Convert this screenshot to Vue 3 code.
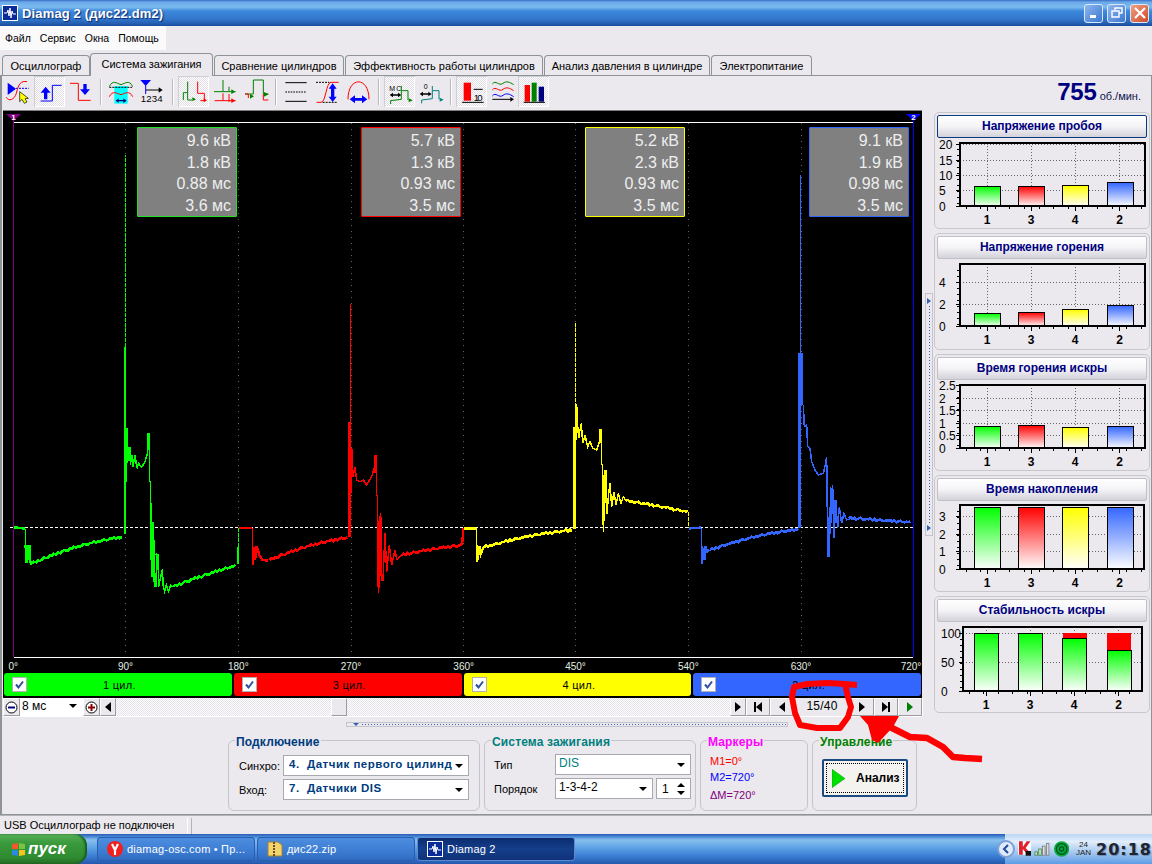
<script setup>
const jitter = [0, -3, 2, -2, 3, 0, -3, 1, 2, -1]

// noisy rising part of a trace, in the units of the trace group (3 units = 1px)
const slope = (x0, y0, x1, y1, bow = 0) => {
  const pts = []
  let i = 0
  for (let x = x0; x <= x1; x += 6) {
    const t = (x - x0) / (x1 - x0)
    const y = y0 + (y1 - y0) * t - bow * Math.sin(Math.PI * t)
    pts.push(x + ',' + Math.round(y + jitter[i++ % jitter.length]))
  }
  return pts.join(' ')
}

const traces = [
  {
    color: '#00ff00', tx: 0,
    thick: [
      '42,712 76,716',
      '77,765 79,818 85,770 88,770 89,810 94,824',
      slope(96, 820, 370, 740, 10),
      '375,732 375,172',
      '378,415 378,575',
      '446,428 446,480',
    ],
    thin: [
      '76,716 76,815',
      '380,415 382,415 383,520 385,472 390,472 391,525 396,495 399,530 405,495 411,535 416,520 425,532 435,515 442,492 445,430 448,430 449,575 452,575 453,792 456,860 459,695 461,725 463,890 468,890 470,792 475,795 476,890 480,870 487,838 490,890 494,905 499,885 506,905 512,885 518,892',
    ],
    thick2: [slope(520, 890, 710, 826, 3), '714,822 714,770', '380,415 380,520', '470,792 474,840', '459,725 461,850'],
    dashed: ['376,172 376,-405', '715,770 715,712'],
  },
  {
    color: '#ff0000', tx: 0,
    thick: [
      '718,714 757,714',
      '759,825 761,770 765,810 770,770 778,795 788,810 805,812',
      slope(808, 810, 1046, 742, 8),
      '1049,740 1049,397',
      '1053,475 1053,610',
      slope(1205, 795, 1380, 766, 2),
      '1127,495 1127,550',
    ],
    thin: [
      '757,714 757,825',
      '1051,397 1051,42',
      '1056,478 1059,560 1065,530 1070,570 1080,575 1090,570 1100,585 1115,560 1124,530 1128,495 1130,615 1133,620 1134,880 1136,908 1141,670 1144,870 1149,870 1155,730 1160,845 1168,765 1175,825 1185,780 1190,808 1205,795',
    ],
    thick2: ['1135,700 1135,880', '1143,680 1143,800', '1380,766 1386,762 1388,745 1390,715'],
    dashed: [],
  },
  {
    color: '#ffff00', tx: 460,
    thick: [
      '12,715 48,715',
      '51,765 51,815 58,770 62,792 70,772',
      slope(72, 772, 340, 720, 7),
      '344,718 344,412',
      '348,342 348,450',
      '422,418 422,460',
      slope(498, 632, 684, 666, 1),
      '429,600 429,705',
      '437,540 437,640',
    ],
    thin: [
      '49,715 49,815',
      '350,342 352,395 356,445 360,420 364,400 368,460 375,435 383,470 390,455 398,475 410,480 418,455 423,418 425,522 428,525 430,725 433,650 437,540 441,672 445,620 450,580 455,650 462,605 468,645 475,610 483,640 490,620 498,632',
    ],
    thick2: [],
    dashed: ['346,410 346,98', '685,666 685,715'],
  },
  {
    color: '#3366ff', tx: 460,
    thick: [
      '688,715 722,713',
      '726,822 726,768 733,810 736,770 742,785 748,780',
      slope(750, 780, 1015, 718, 8),
      '1019,715 1019,190',
      '1024,190 1024,345',
      '1113,595 1113,700',
      '1127,630 1127,700',
      slope(1165, 684, 1356, 697, 0),
      '1106,680 1106,800',
    ],
    thin: [
      '724,713 724,820',
      '1021,190 1021,-345',
      '1030,345 1033,410 1040,405 1043,470 1050,475 1055,515 1065,540 1075,555 1090,550 1097,520 1100,500 1102,665 1105,800 1108,800 1112,590 1115,680 1118,585 1122,745 1127,630 1133,715 1138,650 1145,700 1152,670 1160,690 1175,685',
    ],
    thick2: [],
    dashed: [],
  },
]

const gridX = [13.3, 125.5, 238.3, 351, 463.7, 575.5, 688.3, 801, 913.3]
const degrees = gridX.map((x, i) => ({ x: Math.min(x, 911), label: i * 90 + '°' }))

const readings = [
  { x: 137, color: '#22e022', rows: ['9.6 кВ', '1.8 кВ', '0.88 мс', '3.6 мс'] },
  { x: 361, color: '#ff0000', rows: ['5.7 кВ', '1.3 кВ', '0.93 мс', '3.5 мс'] },
  { x: 585, color: '#ffff00', rows: ['5.2 кВ', '2.3 кВ', '0.93 мс', '3.5 мс'] },
  { x: 809, color: '#3366ff', rows: ['9.1 кВ', '1.9 кВ', '0.98 мс', '3.5 мс'] },
]

const channels = [
  { name: '1 цил.', cls: 'c-green' },
  { name: '3 цил.', cls: 'c-red' },
  { name: '4 цил.', cls: 'c-yellow' },
  { name: '2 цил.', cls: 'c-blue' },
]

const barColors = ['g', 'r', 'y', 'b']
const barX = [974, 1018, 1062, 1106.5]
const barNames = ['1', '3', '4', '2']

const panels = [
  {
    title: 'Напряжение пробоя', focus: true, top: 112, box: [960, 143, 1145, 206], barW: 26,
    ticks: [['20', 144], ['15', 160], ['10', 175], ['5', 190], ['0', 206]], tops: [186, 186, 185, 182],
  },
  {
    title: 'Напряжение горения', top: 233, box: [960, 264, 1145, 326], barW: 26,
    ticks: [['4', 282], ['2', 304], ['0', 326]], tops: [313, 312, 309, 305],
  },
  {
    title: 'Время горения искры', top: 354, box: [960, 385, 1145, 448], barW: 26,
    ticks: [['2.5', 385], ['2', 398], ['1.5', 410], ['1', 423], ['0.5', 435], ['0', 448]], tops: [426, 425, 427, 426],
  },
  {
    title: 'Время накопления', top: 475, box: [960, 505, 1144, 569], barW: 26,
    ticks: [['3', 516], ['2', 534], ['1', 551], ['0', 569]], tops: [507, 507, 507, 507],
  },
  {
    title: 'Стабильность искры', top: 596, box: [963, 627, 1142, 691], barW: 24, labelX: 941,
    ticks: [['100', 633], ['50', 662], ['0', 691]], tops: [633, 633, 638, 650], redFrom: 633,
  },
]

const minorTicks = (box) => {
  const out = []
  for (let x = box[0] + 6; x < box[2]; x += 14.6) out.push(x)
  return out
}
const leftTicks = (box) => {
  const out = []
  for (let y = box[1] + 6; y < box[3]; y += 6) out.push(y)
  return out
}

const menu = ['Файл', 'Сервис', 'Окна', 'Помощь']
const tabs = [
  { text: 'Осциллограф', w: 88 },
  { text: 'Система зажигания', w: 123, active: true },
  { text: 'Сравнение цилиндров', w: 130 },
  { text: 'Эффективность работы цилиндров', w: 198 },
  { text: 'Анализ давления в цилиндре', w: 166 },
  { text: 'Электропитание', w: 101 },
]
</script>

<template>
  <div class="desktop">
    <div class="titlebar">
      <svg class="app-icon" width="16" height="16" viewBox="0 0 16 16">
        <rect x="0.5" y="0.5" width="15" height="15" fill="#0a2a9a" stroke="#fff" />
        <path d="M2 8H5L6 5L7 11L8 3L9 13L10 6L11 9H14" fill="none" stroke="#fff" stroke-width="1" />
      </svg>
      <span class="title-text">Diamag 2 (дис22.dm2)</span>
      <div class="win-btns">
        <div class="win-btn">
          <svg width="12" height="12" viewBox="0 0 12 12"><rect x="2" y="8" width="6" height="3" fill="#fff" /></svg>
        </div>
        <div class="win-btn">
          <svg width="12" height="12" viewBox="0 0 12 12"><path d="M4 3V1H11V6H8M1 4H8V10H1z" fill="none" stroke="#fff" stroke-width="1.4" /></svg>
        </div>
        <div class="win-btn close">
          <svg width="12" height="12" viewBox="0 0 12 12"><path d="M1 1L11 11M11 1L1 11" stroke="#fff" stroke-width="2.2" /></svg>
        </div>
      </div>
    </div>

    <div class="menubar">
      <div class="menu-items"><span v-for="m in menu" :key="m">{{ m }}</span></div>
    </div>

    <div class="tabs">
      <div v-for="t in tabs" :key="t.text" class="tab" :class="{ active: t.active }" :style="{ width: t.w + 'px' }">{{ t.text }}</div>
    </div>

    <div class="main">
      <div class="toolbar">
        <div class="tool"><svg viewBox="8 18 93 93">
          <path d="M22 38V75L47 56z" fill="#0000ff" />
          <path d="M47 55H85" stroke="#0000ff" stroke-width="3" stroke-dasharray="6 3" fill="none" />
          <path d="M18 82C25 95 42 90 48 70C55 40 62 32 80 35" stroke="#f00" stroke-width="3" fill="none" />
          <path d="M58 65V95L65 88L72 100L80 96L74 86L84 85z" fill="#ff0" stroke="#000" stroke-width="2" />
        </svg></div>
        <div class="tool on"><svg viewBox="100 18 93 93">
          <path d="M120 68L135 50L150 68H140V88H130V68z" fill="#0000ff" />
          <path d="M120 93H155V46H183" fill="none" stroke="#0000ff" stroke-width="3" />
        </svg></div>
        <div class="tool"><svg viewBox="195 18 93 93">
          <path d="M210 40H235V91H272" fill="none" stroke="#f00" stroke-width="3" />
          <path d="M250 42H260V58H270L255 75L240 58H250z" fill="#0000ff" />
        </svg></div>
        <div class="sep"></div>
        <div class="tool"><svg viewBox="320 18 93 93">
          <rect x="345" y="48" width="40" height="53" fill="#00ffff" />
          <path d="M330 50C340 28 352 40 365 44C378 40 390 28 400 50" fill="none" stroke="#008000" stroke-width="3" />
          <path d="M330 52H398" stroke="#000" stroke-width="3" stroke-dasharray="6 3" />
          <path d="M330 80C340 60 352 70 365 74C378 70 390 60 400 80" fill="none" stroke="#f00" stroke-width="3" />
          <path d="M349 92L358 85V90H372V85L382 92L372 99V94H358V99z" fill="#000080" />
        </svg></div>
        <div class="tool"><svg viewBox="413 18 93 93">
          <path d="M423 30H455L439 48z" fill="#0000ff" />
          <path d="M439 46V72" stroke="#0000ff" stroke-width="3" />
          <path d="M440 60H480" stroke="#000" stroke-width="3" />
          <path d="M478 52L490 60L478 68z" fill="#000" />
          <text x="424" y="97" class="ico-text big" textLength="66">1234</text>
        </svg></div>
        <div class="sep"></div>
        <div class="tool on"><svg viewBox="531 18 93 93">
          <path d="M547 90V68H560V35M560 68V90H573" fill="none" stroke="#008000" stroke-width="3" />
          <path d="M574 82L585 88L574 94z" fill="#008000" />
          <path d="M590 35V70H610V92H598" fill="none" stroke="#f00" stroke-width="3" />
          <path d="M608 85L618 91L608 97z" fill="#f00" />
        </svg></div>
        <div class="tool"><svg viewBox="625 18 93 93">
          <path d="M640 65H705M667 30V65M685 50V65" fill="none" stroke="#008000" stroke-width="3" />
          <path d="M692 58L704 65L692 72z" fill="#008000" />
          <path d="M642 92H705M667 70V92M685 72V96" fill="none" stroke="#f00" stroke-width="3" />
          <path d="M692 85L704 92L692 99z" fill="#f00" />
        </svg></div>
        <div class="tool"><svg viewBox="720 18 93 93">
          <path d="M735 72H760V30H790V72H805" fill="none" stroke="#008000" stroke-width="3" />
          <path d="M735 72H745V84M790 72V90H805" fill="none" stroke="#f00" stroke-width="3" />
          <path d="M750 72L762 79L750 86z" fill="#008000" />
          <path d="M792 66L806 73L792 80z" fill="#008000" />
        </svg></div>
        <div class="sep"></div>
        <div class="tool"><svg viewBox="5 18 93 93">
          <path d="M18 38H82M18 94H82" stroke="#000" stroke-width="3" />
          <path d="M18 66H82" stroke="#000" stroke-width="3" stroke-dasharray="5 3" />
        </svg></div>
        <div class="tool"><svg viewBox="98 18 93 93">
          <path d="M110 37H150M130 97H175" stroke="#000" stroke-width="3" stroke-dasharray="6 3" />
          <path d="M112 97H125C140 97 140 37 155 37H178" fill="none" stroke="#f00" stroke-width="3" />
          <path d="M160 40L172 56H165V80H172L160 96L148 80H155V56H148z" fill="#0000ff" />
        </svg></div>
        <div class="tool"><svg viewBox="197 18 93 93">
          <path d="M212 88C212 18 275 18 275 88" fill="none" stroke="#f00" stroke-width="3" />
          <path d="M217 88L233 76V84H254V76L270 88L254 100V92H233V100z" fill="#0000ff" />
        </svg></div>
        <div class="sep"></div>
        <div class="tool on"><svg viewBox="316 18 93 93">
          <text x="332" y="62" class="ico-text" textLength="36">МС</text>
          <path d="M333 75L343 68V73H358V68L368 75L358 82V77H343V82z" fill="#000" />
          <path d="M336 102V92L368 88V48M370 62H388V90" fill="none" stroke="#008000" stroke-width="3" />
          <path d="M390 85L402 91L390 97z" fill="#008000" />
        </svg></div>
        <div class="tool"><svg viewBox="410 18 93 93">
          <text x="436" y="58" class="ico-text">0</text>
          <path d="M424 72L434 65V70H450V65L460 72L450 79V74H434V79z" fill="#000" />
          <path d="M430 100V90L462 86V48M464 62H482V88" fill="none" stroke="#008080" stroke-width="3" />
          <path d="M484 83L496 89L484 95z" fill="#008080" />
        </svg></div>
        <div class="sep"></div>
        <div class="tool on"><svg viewBox="532 18 93 93">
          <rect x="555" y="38" width="22" height="54" fill="#f00" />
          <path d="M550 97H615" stroke="#000" stroke-width="3" />
          <path d="M585 58H612" stroke="#000" stroke-width="3" />
          <text x="585" y="92" class="ico-text big" textLength="27">10</text>
        </svg></div>
        <div class="tool"><svg viewBox="626 18 93 93">
          <path d="M642 42C652 28 662 50 674 40C684 32 694 36 706 44" fill="none" stroke="#008000" stroke-width="3" />
          <path d="M642 60C652 46 662 68 674 58C684 50 694 54 706 62" fill="none" stroke="#f00" stroke-width="3" />
          <path d="M642 78C652 64 662 86 674 76C684 68 694 72 706 80" fill="none" stroke="#0000ff" stroke-width="3" />
          <path d="M642 88H698" stroke="#000" stroke-width="3" />
          <path d="M696 81L707 88L696 95z" fill="#000" />
        </svg></div>
        <div class="tool on"><svg viewBox="724 18 93 93">
          <rect x="744" y="45" width="16" height="50" fill="#f00" />
          <rect x="765" y="38" width="15" height="57" fill="#008000" />
          <rect x="786" y="50" width="16" height="45" fill="#000080" />
          <path d="M741 97H805" stroke="#000" stroke-width="3" />
        </svg></div>
        <div class="rpm"><b>755</b><span>об./мин.</span></div>
      </div>

      <div class="body">
        <div class="scope-col">
          <div class="scope">
            <svg class="plot" width="919" height="561" viewBox="3 111 919 561">
              <path d="M13.5 122H913M13.5 657H913" stroke="#fff" stroke-width="1" shape-rendering="crispEdges" />
              <path v-for="x in gridX" :key="x" :d="`M${x} 123V656`" stroke="#666" stroke-dasharray="1 5" stroke-width="1" shape-rendering="crispEdges" />
              <path d="M13.5 114V657" stroke="#800080" stroke-width="1" shape-rendering="crispEdges" />
              <path d="M913.5 114V657" stroke="#0000ff" stroke-width="1" shape-rendering="crispEdges" />
              <path d="M6 114H21L13.5 121z" fill="#800080" />
              <path d="M906 114H921L913.5 121z" fill="#0000ff" />
              <text x="13.5" y="120" class="mark-num">1</text>
              <text x="913.5" y="120" class="mark-num">2</text>
              <path d="M10 527.5H913" stroke="#fff" stroke-width="1" stroke-dasharray="3 2" shape-rendering="crispEdges" />
              <g v-for="t in traces" :key="t.color" :transform="`translate(${t.tx} 290) scale(0.33333)`" fill="none" :stroke="t.color" shape-rendering="crispEdges" stroke-linejoin="miter">
                <polyline v-for="p in t.thin" :key="p" :points="p" stroke-width="4.5" />
                <polyline v-for="p in t.thick" :key="p" :points="p" stroke-width="7.5" />
                <polyline v-for="p in t.thick2" :key="p" :points="p" stroke-width="7.5" />
                <polyline v-for="p in t.dashed" :key="p" :points="p" stroke-width="3" stroke-dasharray="12 3" />
              </g>
              <text v-for="d in degrees" :key="d.label" :x="d.x" y="670" class="deg">{{ d.label }}</text>
            </svg>
            <div v-for="r in readings" :key="r.x" class="reading" :style="{ left: r.x - 3 + 'px', borderColor: r.color }">
              <div v-for="(row, i) in r.rows" :key="i">{{ row }}</div>
            </div>
            <div class="channels">
              <div v-for="c in channels" :key="c.name" class="channel" :class="c.cls">
                <span class="check">
                  <svg width="13" height="13" viewBox="0 0 13 13"><path d="M3 6.5L5.5 9.5L10 3.5" fill="none" stroke="#2c4f9e" stroke-width="2" /></svg>
                </span>
                <span class="ch-name">{{ c.name }}</span>
              </div>
            </div>
          </div>
          <div class="ctrl">
            <div class="bev round"><svg width="13" height="13" viewBox="0 0 13 13"><circle cx="6.5" cy="6.5" r="5.5" fill="#fff" stroke="#000" /><path d="M3 6.5H10" stroke="#000080" stroke-width="2" /></svg></div>
            <div class="time-sel"><span>8 мс</span><i class="tri"></i></div>
            <div class="bev round"><svg width="13" height="13" viewBox="0 0 13 13"><circle cx="6.5" cy="6.5" r="5.5" fill="#fff" stroke="#000" /><path d="M3 6.5H10M6.5 3V10" stroke="#8b0000" stroke-width="2" /></svg></div>
            <div class="bev"><i class="arr-l"></i></div>
            <div class="track"><div class="thumb"></div></div>
            <div class="bev"><i class="arr-r"></i></div>
            <div class="bev wide"><i class="bar"></i><i class="arr-l"></i></div>
            <div class="bev wide"><i class="arr-l"></i></div>
            <div class="counter">15/40</div>
            <div class="bev wide"><i class="arr-r"></i></div>
            <div class="bev wide"><i class="arr-r"></i><i class="bar"></i></div>
            <div class="bev wide"><i class="arr-r green"></i></div>
          </div>
        </div>

        <div class="vsplit"><i class="arr-blue"></i><i class="dots"></i><i class="arr-blue"></i></div>

        <div class="panels">
          <div v-for="p in panels" :key="p.title" class="panel">
            <div class="panel-btn" :class="{ focus: p.focus }">{{ p.title }}</div>
            <svg width="214" height="90" :viewBox="`935 ${p.top + 26} 214 90`">
              <g stroke="#666" stroke-dasharray="1 2" stroke-width="1" shape-rendering="crispEdges">
                <path v-for="t in p.ticks" :key="t[0]" :d="`M${p.box[0]} ${t[1]}H${p.box[2]}`" />
                <path v-for="x in barX" :key="x" :d="`M${x + p.barW / 2} ${p.box[1]}V${p.box[3]}`" />
              </g>
              <g stroke="#000" stroke-width="1" shape-rendering="crispEdges">
                <path v-for="x in minorTicks(p.box)" :key="x" :d="`M${x} ${p.box[3]}v3`" />
                <path v-for="y in leftTicks(p.box)" :key="y" :d="`M${p.box[0] - 3} ${y}h3`" />
                <path v-for="t in p.ticks" :key="t[0]" :d="`M${p.box[0] - 4} ${t[1]}h4`" />
                <path v-for="x in barX" :key="x" :d="`M${x + p.barW / 2} ${p.box[3]}v5`" />
              </g>
              <g v-for="(x, i) in barX" :key="x" shape-rendering="crispEdges">
                <rect v-if="p.redFrom" :x="x + 0.5" :y="p.redFrom" :width="p.barW" :height="p.tops[i] - p.redFrom + 1" fill="#f00" />
                <rect :x="x + 0.5" :y="p.tops[i] + 0.5" :width="p.barW" :height="p.box[3] - p.tops[i]" :fill="`url(#grad-${barColors[p.redFrom ? 0 : i]})`" stroke="#000" />
              </g>
              <rect :x="p.box[0]" :y="p.box[1]" :width="p.box[2] - p.box[0]" :height="p.box[3] - p.box[1]" fill="none" stroke="#000" stroke-width="2" shape-rendering="crispEdges" />
              <text v-for="t in p.ticks" :key="t[0]" :x="p.labelX || 939" :y="t[1] + 4.5" class="ax">{{ t[0] }}</text>
              <text v-for="(x, i) in barX" :key="x" :x="x + p.barW / 2" :y="p.box[3] + 18" class="bar-name">{{ barNames[i] }}</text>
            </svg>
          </div>
        </div>
      </div>

      <div class="bottom">
        <div class="hsplit"><i class="tri-blue"></i><i class="hdots"></i></div>
        <div class="groups">
          <fieldset class="grp g1">
            <legend>Подключение</legend>
            <div class="form">
              <label>Синхро:</label>
              <div class="combo strong"><span>4.&nbsp;&nbsp;Датчик первого цилинд</span><i class="tri"></i></div>
              <label>Вход:</label>
              <div class="combo strong"><span>7.&nbsp;&nbsp;Датчики DIS</span><i class="tri"></i></div>
            </div>
          </fieldset>
          <fieldset class="grp g2">
            <legend>Система зажигания</legend>
            <div class="form">
              <label>Тип</label>
              <div class="combo teal"><span>DIS</span><i class="tri"></i></div>
              <label>Порядок</label>
              <div class="order">
                <div class="combo"><span>1-3-4-2</span><i class="tri"></i></div>
                <div class="spin"><span>1</span><div class="spin-btns"><i class="tri up"></i><i class="tri"></i></div></div>
              </div>
            </div>
          </fieldset>
          <fieldset class="grp g3">
            <legend>Маркеры</legend>
            <div class="markers">
              <div class="m1">M1=0°</div>
              <div class="m2">M2=720°</div>
              <div class="m3">ΔM=720°</div>
            </div>
          </fieldset>
          <fieldset class="grp g4">
            <legend>Управление</legend>
            <div class="run">
              <div class="run-inner">
                <svg width="13" height="19" viewBox="0 0 14 20"><path d="M0 0L14 10L0 20z" fill="#00e000" stroke="#008000" stroke-width="0.5" /></svg>
                <b>Анализ</b>
              </div>
            </div>
          </fieldset>
        </div>
      </div>
    </div>

    <div class="status">
      <div class="st-cell">USB Осциллограф не подключен</div>
      <div class="st-rest"></div>
    </div>

    <div class="taskbar">
      <div class="start">
        <svg width="15" height="15" viewBox="0 0 15 15">
          <path d="M1 2L7 1V7L1 7z" fill="#f05a28" />
          <path d="M8 1L14 2V7H8z" fill="#7cc242" />
          <path d="M1 8H7V14L1 13z" fill="#2a8ae0" />
          <path d="M8 8H14V13L8 14z" fill="#f8c51c" />
        </svg>
        <span>пуск</span>
      </div>
      <div class="task">
        <svg width="16" height="16" viewBox="0 0 16 16"><circle cx="8" cy="8" r="8" fill="#f02020" /><path d="M5 3L8 9V14M11 3L8 9" fill="none" stroke="#fff" stroke-width="2.2" /></svg>
        <span>diamag-osc.com • Пр...</span>
      </div>
      <div class="task">
        <svg width="16" height="16" viewBox="0 0 16 16"><path d="M1 1H11L15 4V15H1z" fill="#f3d36b" stroke="#a08030" /><path d="M7 1V15" stroke="#705020" stroke-width="2" stroke-dasharray="2 1" /></svg>
        <span>дис22.zip</span>
      </div>
      <div class="task current">
        <svg width="16" height="16" viewBox="0 0 16 16"><rect x="0.5" y="0.5" width="15" height="15" fill="#0a2a9a" stroke="#fff" /><path d="M2 8H5L6 5L7 11L8 3L9 13L10 6L11 9H14" fill="none" stroke="#fff" /></svg>
        <span>Diamag 2</span>
      </div>
      <div class="tray">
        <svg class="chev" width="18" height="18" viewBox="0 0 18 18"><circle cx="9" cy="9" r="8" fill="#dfeafa" stroke="#7f9fd8" stroke-width="2" /><path d="M11 5L7 9L11 13" fill="none" stroke="#224a9a" stroke-width="2" /></svg>
        <svg width="14" height="16" viewBox="0 0 14 16"><rect width="14" height="14" fill="#fff" /><path d="M1 0V14H5V8L10 14H14L8 7L13 0H9L5 6V0z" fill="#e02030" /><rect x="8" y="10" width="6" height="5" fill="#111" /></svg>
        <svg width="17" height="14" viewBox="0 0 17 14"><g fill="#cfe8c8" stroke="#3a7a3a" stroke-width="0.8"><rect x="1" y="10" width="2.6" height="3.5" /><rect x="5" y="7" width="2.6" height="6.5" /></g><g fill="#ddd" stroke="#777" stroke-width="0.8"><rect x="9" y="4" width="2.6" height="9.5" /><rect x="13" y="1" width="2.6" height="12.5" /></g></svg>
        <svg width="16" height="16" viewBox="0 0 16 16"><circle cx="8" cy="8" r="8" fill="#0aa83c" /><circle cx="8" cy="8" r="5.5" fill="none" stroke="#052" stroke-width="1.3" /><circle cx="8" cy="8" r="2.2" fill="none" stroke="#052" stroke-width="1.3" /></svg>
        <div class="date"><span>24</span><span>JAN</span></div>
        <div class="clock">20:18</div>
      </div>
    </div>

    <!-- red marker drawn by hand over the screenshot -->
    <svg class="scribble" width="1152" height="864" viewBox="0 0 1152 864">
      <defs>
        <linearGradient id="grad-g" x1="0" y1="0" x2="0" y2="1"><stop offset="0" stop-color="#00ff00" /><stop offset="1" stop-color="#fff" /></linearGradient>
        <linearGradient id="grad-r" x1="0" y1="0" x2="0" y2="1"><stop offset="0" stop-color="#ff0000" /><stop offset="1" stop-color="#fff" /></linearGradient>
        <linearGradient id="grad-y" x1="0" y1="0" x2="0" y2="1"><stop offset="0" stop-color="#ffff00" /><stop offset="1" stop-color="#fff" /></linearGradient>
        <linearGradient id="grad-b" x1="0" y1="0" x2="0" y2="1"><stop offset="0" stop-color="#3366ff" /><stop offset="1" stop-color="#fff" /></linearGradient>
      </defs>
      <polyline points="857,685 845,684 827,683 807,684 794,687 792,697 795,713 800,725 817,728 840,728 848,717 851,707 848,697 845,684" fill="none" stroke="#f00" stroke-width="6" stroke-linejoin="round" />
      <path d="M860 716H899L893 727L878 743L872 740L868 725z" fill="#f00" />
      <polyline points="890,727 910,737 927,738 943,747 953,757 965,758 982,759" fill="none" stroke="#f00" stroke-width="6.5" stroke-linejoin="round" />
    </svg>
  </div>
</template>

<style>
html, body { margin: 0; background: #ebe9ed; }
</style>

<style scoped>
.desktop {
  position: relative;
  width: 1152px;
  height: 864px;
  overflow: hidden;
  display: flex;
  flex-direction: column;
  background: #ebe9ed;
  font-family: "Liberation Sans", Arial, sans-serif;
  font-size: 11px;
  color: #000;
}
i { display: block; font-style: normal; }

.titlebar {
  height: 26px;
  flex: none;
  display: flex;
  align-items: center;
  padding-left: 2px;
  background: linear-gradient(#3a6cc8 0, #6aa8e8 2px, #7cbcf0 7px, #3d88dc 11px, #3277cc 19px, #1f55a8 25px, #1c4a98 26px);
  box-sizing: border-box;
}
.app-icon { margin-right: 4px; }
.title-text {
  color: #fff;
  font-weight: bold;
  font-size: 13px;
  letter-spacing: 0.15px;
  text-shadow: 1px 1px 1px #0a2a70;
}
.win-btns { margin-left: auto; display: flex; gap: 4px; padding-right: 3px; }
.win-btn {
  width: 19px;
  height: 19px;
  box-sizing: border-box;
  border: 1px solid #d8e8f8;
  border-radius: 3px;
  background: linear-gradient(135deg, #8fb8ee, #3a76d0);
  display: flex;
  align-items: center;
  justify-content: center;
}
.win-btn.close { background: linear-gradient(135deg, #f0a080, #d04a2a); }

.menubar { height: 24px; flex: none; }
.menu-items {
  width: 166px;
  height: 24px;
  background: #fafafa;
  display: flex;
  align-items: center;
  gap: 9px;
  padding-left: 5px;
  box-sizing: border-box;
  font-size: 10.5px;
}

.tabs {
  height: 25px;
  flex: none;
  display: flex;
  align-items: flex-end;
  padding-left: 2px;
  position: relative;
  z-index: 2;
}
.tab {
  height: 20px;
  box-sizing: border-box;
  margin-right: 1px;
  border: 1px solid #8e9496;
  border-bottom: 0;
  border-radius: 4px 4px 0 0;
  display: flex;
  align-items: center;
  justify-content: center;
}
.tab:nth-child(1) { margin-right: 0; }
.tab.active {
  height: 23px;
  margin-bottom: -1px;
  background: #ebe9ed;
  border-top-color: #8e9496;
  padding-bottom: 3px;
}

.main {
  height: 740px;
  flex: none;
  box-sizing: border-box;
  border: 1px solid #8e9496;
  border-left-width: 2px;
  display: flex;
  flex-direction: column;
}
.toolbar {
  height: 35px;
  flex: none;
  display: flex;
  align-items: flex-start;
  padding-left: 1px;
}
.tool {
  width: 31px;
  height: 31px;
  flex: none;
  box-sizing: border-box;
}
.tool svg { display: block; width: 31px; height: 31px; }
.ico-text { font-size: 21px; font-family: "Liberation Sans", sans-serif; fill: #000; }
.ico-text.big { font-size: 29px; }
.tool.on {
  background: repeating-conic-gradient(#ffffff 0 25%, #e0dee4 0 50%) 0 0 / 2px 2px;
  box-shadow: inset 1px 1px 0 #cfcfd4, inset -1px -1px 0 #fff;
}
.sep {
  width: 2px;
  height: 26px;
  flex: none;
  margin: 3px 4px 0;
  background: #b8b8bc;
  border-right: 1px solid #fff;
  box-sizing: border-box;
}
.rpm {
  margin-left: auto;
  padding: 2px 10px 0 0;
  display: flex;
  align-items: baseline;
  gap: 3px;
  color: #000080;
}
.rpm b { font-size: 24px; letter-spacing: -0.2px; }
.rpm span { font-size: 11px; color: #101050; }

.body {
  height: 606px;
  flex: none;
  display: flex;
}
.scope-col { width: 921px; padding-left: 1px; flex: none; box-sizing: border-box; }
.scope {
  position: relative;
  width: 919px;
  height: 587px;
  background: #000;
  box-shadow: 0 -1px 0 #808080;
}
.plot { display: block; }
.mark-num { font-size: 8px; font-weight: bold; fill: #fff; text-anchor: middle; }
.deg { font-size: 10px; fill: #e0efe0; text-anchor: middle; }
.reading {
  position: absolute;
  top: 16px;
  width: 100px;
  height: 90px;
  box-sizing: border-box;
  background: #808080;
  border: 1px solid;
  border-radius: 1px;
  color: #eee;
  font-size: 16px;
  line-height: 21.6px;
  text-align: right;
  padding: 2px 5px 0 0;
}
.channels {
  display: flex;
  gap: 2px;
  padding: 1px 1px 0;
  height: 23px;
}
.channel {
  flex: 1;
  height: 23px;
  border-radius: 3px;
  display: flex;
  align-items: center;
  box-sizing: border-box;
  padding-left: 8px;
  font-size: 11px;
  letter-spacing: 0.3px;
}
.c-green { background: #00ff00; }
.c-red { background: #ff0000; }
.c-yellow { background: #ffff00; }
.c-blue { background: #3366ff; }
.check {
  width: 13px;
  height: 13px;
  background: #fff;
  border: 1px solid #b0b0b0;
  flex: none;
  display: block;
}
.check svg { display: block; }
.ch-name { flex: 1; text-align: center; padding-right: 20px; }

.ctrl {
  width: 919px;
  height: 18px;
  display: flex;
  background: #ebe9ed;
  box-shadow: 0 1px 0 #fff, 1px 0 0 #fff;
}
.bev {
  width: 16px;
  height: 18px;
  flex: none;
  box-sizing: border-box;
  background: #ebe9ed;
  border: 1px solid #fff;
  border-right-color: #9c9ca0;
  border-bottom-color: #9c9ca0;
  display: flex;
  align-items: center;
  justify-content: center;
}
.bev.round { width: 17px; }
.bev.wide { width: 24px; }
.time-sel {
  width: 63px;
  flex: none;
  background: #fff;
  display: flex;
  align-items: center;
  font-size: 12px;
  padding: 0 6px 3px 2px;
  box-sizing: border-box;
  justify-content: space-between;
}
.tri {
  width: 0;
  height: 0;
  border: 4px solid transparent;
  border-top: 4px solid #000;
  border-bottom: 0;
  flex: none;
}
.tri.up { border-top: 0; border-bottom: 4px solid #000; }
.arr-l { width: 0; height: 0; border: 5px solid transparent; border-right: 6px solid #000; border-left: 0; }
.arr-r { width: 0; height: 0; border: 5px solid transparent; border-left: 6px solid #000; border-right: 0; }
.arr-r.green { border-left-color: #008000; }
.bar { width: 2px; height: 10px; background: #000; }
.track {
  flex: 1;
  position: relative;
  background: repeating-conic-gradient(#ffffff 0 25%, #e4e2e8 0 50%) 0 0 / 2px 2px;
}
.thumb {
  position: absolute;
  left: 215px;
  top: 0;
  width: 16px;
  height: 18px;
  box-sizing: border-box;
  background: #ebe9ed;
  border: 1px solid #fff;
  border-right-color: #9c9ca0;
  border-bottom-color: #9c9ca0;
}
.counter {
  width: 56px;
  flex: none;
  text-align: center;
  font-size: 12px;
  line-height: 17px;
  letter-spacing: 0.2px;
}

.vsplit {
  align-self: center;
  width: 8px;
  height: 243px;
  margin: 0 1px 0 2px;
  flex: none;
  box-sizing: border-box;
  border: 1px solid #c4c4cc;
  display: flex;
  flex-direction: column;
  align-items: center;
  justify-content: space-between;
  padding: 4px 0;
}
.arr-blue { width: 0; height: 0; border: 3px solid transparent; border-left: 4px solid #3060b0; border-right: 0; }
.dots { flex: 1; width: 1px; margin: 2px 0; background: repeating-linear-gradient(#3060b0 0 1px, transparent 1px 3px); }

.panels {
  width: 216px;
  flex: none;
  display: flex;
  flex-direction: column;
  gap: 4px;
  padding-top: 1px;
}
.panel {
  height: 117px;
  box-sizing: border-box;
  border: 1px solid #c8c8cc;
  border-radius: 5px;
  padding: 2px 2px 0 2px;
}
.panel svg { display: block; margin-left: -2px; }
.panel-btn {
  height: 23px;
  box-sizing: border-box;
  border: 1px solid #c0c0c8;
  border-radius: 2px;
  background: linear-gradient(#fff, #f4f3f6 50%, #d4d2da);
  color: #000080;
  font-weight: bold;
  font-size: 12px;
  text-align: center;
  line-height: 21px;
}
.panel-btn.focus { border-color: #0a3a80; }
.ax { font-size: 12px; fill: #000; }
.bar-name { font-size: 12px; font-weight: bold; text-anchor: middle; fill: #000; }

.bottom { flex: 1; }
.hsplit {
  margin: 5px 0 0 344px;
  width: 442px;
  height: 5px;
  border: 1px solid #c4c4cc;
  box-sizing: border-box;
  display: flex;
  align-items: center;
  gap: 3px;
  padding-left: 6px;
}
.tri-blue { width: 0; height: 0; border: 3px solid transparent; border-top: 3px solid #3060b0; border-bottom: 0; }
.hdots { flex: 1; height: 1px; background: repeating-linear-gradient(90deg, #3060b0 0 1px, transparent 1px 3px); }
.groups {
  display: flex;
  gap: 4px;
  margin: 6px 0 0 226px;
}
.grp {
  margin: 0;
  padding: 0;
  height: 78px;
  box-sizing: border-box;
  border: 1px solid #c4c4cc;
  border-radius: 6px;
  min-width: 0;
}
.grp legend {
  position: relative;
  top: 2px;
  margin-left: 6px;
  padding: 0 1px;
  font-weight: bold;
  font-size: 12px;
  letter-spacing: 0.15px;
  line-height: 15px;
}
.g1 { width: 252px; }
.g1 legend { color: #003c80; }
.g2 { width: 212px; }
.g2 legend { color: #008080; }
.g3 { width: 108px; }
.g3 legend { color: #ff00ff; }
.g4 { width: 105px; }
.g4 legend { color: #008000; }

.form {
  display: grid;
  align-items: center;
  row-gap: 3px;
  padding-top: 6px;
  font-size: 11px;
}
.g1 .form { grid-template-columns: 44px 186px; padding-left: 10px; padding-top: 7px; }
.g2 .form { grid-template-columns: 61px 1fr; padding-left: 9px; padding-right: 4px; }
.combo {
  height: 21px;
  box-sizing: border-box;
  background: #fff;
  border: 1px solid #a8a8b0;
  display: flex;
  align-items: center;
  justify-content: space-between;
  padding: 0 5px 3px 3px;
  white-space: nowrap;
  overflow: hidden;
  font-size: 12px;
}
.combo .tri { margin-top: 3px; }
.strong { color: #003c80; font-weight: bold; letter-spacing: 0.5px; padding-left: 5px; font-size: 11.5px; }
.teal { color: #008080; }
.order { display: flex; gap: 3px; }
.order .combo { width: 98px; flex: none; }
.spin {
  flex: 1;
  height: 21px;
  box-sizing: border-box;
  background: #fff;
  border: 1px solid #a8a8b0;
  display: flex;
  align-items: center;
  justify-content: space-between;
  padding: 0 5px 0 5px;
  font-size: 12px;
}
.spin-btns { display: flex; flex-direction: column; gap: 4px; }
.markers { padding: 5px 0 0 9px; font-size: 11px; line-height: 16px; }
.m1 { color: #f00; }
.m2 { color: #0000ff; }
.m3 { color: #800080; margin-top: 2px; }
.run {
  margin: 11px 0 0 9px;
  width: 86px;
  height: 38px;
  box-sizing: border-box;
  border: 2px solid #1a4a80;
  border-radius: 2px;
  background: #f4f3f0;
  padding: 2px;
}
.run-inner {
  height: 100%;
  box-sizing: border-box;
  border: 1px dotted #000;
  display: flex;
  align-items: center;
  padding-left: 5px;
  gap: 11px;
}
.run-inner b { font-size: 12px; }

.status {
  height: 19px;
  flex: none;
  display: flex;
  padding-top: 2px;
  box-sizing: border-box;
  border-top: 1px solid #b4b4b8;
}
.st-cell {
  width: 188px;
  box-sizing: border-box;
  padding-left: 4px;
  border-right: 1px solid #fff;
  line-height: 15px;
  white-space: nowrap;
}
.st-rest { flex: 1; margin-left: 3px; border-left: 1px solid #b4b4b8; }

.taskbar {
  flex: 1;
  display: flex;
  align-items: center;
  background: linear-gradient(#2c58b4 0, #3e7ed0 2px, #88c0ee 6px, #5ca0e4 14px, #3a7ed4 22px, #2458ac 30px);
}
.start {
  width: 87px;
  height: 30px;
  flex: none;
  box-sizing: border-box;
  border-radius: 0 12px 12px 0;
  background: linear-gradient(#58b058, #3a9a3c 30%, #2e8a30 80%, #246a26);
  display: flex;
  align-items: center;
  gap: 2px;
  padding-left: 11px;
  color: #fff;
  font-weight: bold;
  font-style: italic;
  font-size: 17px;
  box-shadow: inset -2px 0 2px #1a5a1a;
}
.task {
  width: 158px;
  height: 24px;
  flex: none;
  margin-left: 2px;
  box-sizing: border-box;
  border: 1px solid #2a5cb0;
  border-radius: 3px;
  background: linear-gradient(#4e8ee0, #3c7cd2 60%, #2f6cc0);
  color: #fff;
  font-size: 11px;
  display: flex;
  align-items: center;
  gap: 4px;
  padding-left: 9px;
  letter-spacing: 0.2px;
  white-space: nowrap;
}
.start + .task { margin-left: 10px; }
.task.current { background: linear-gradient(#0c2c70, #143e8a 50%, #0f327a); border-color: #5c8ad0; }
.tray {
  margin-left: auto;
  width: 147px;
  height: 30px;
  box-sizing: border-box;
  flex: none;
  display: flex;
  align-items: center;
  gap: 3px;
  background: linear-gradient(#bcd6f4, #e2eefb 25%, #a8caf0 60%, #5c9ce6);
}
.chev { margin-left: -8px; flex: none; }
.date {
  display: flex;
  flex-direction: column;
  align-items: center;
  margin-left: 4px;
  font-size: 8px;
  line-height: 8px;
  color: #222;
}
.clock {
  margin-left: 2px;
  font-family: "DejaVu Sans", sans-serif;
  font-weight: bold;
  font-size: 16px;
  letter-spacing: 1px;
  color: #20242c;
  text-shadow: 1px 1px 1px #6a8ab8;
}

.scribble {
  position: absolute;
  left: 0;
  top: 0;
  pointer-events: none;
}
</style>
